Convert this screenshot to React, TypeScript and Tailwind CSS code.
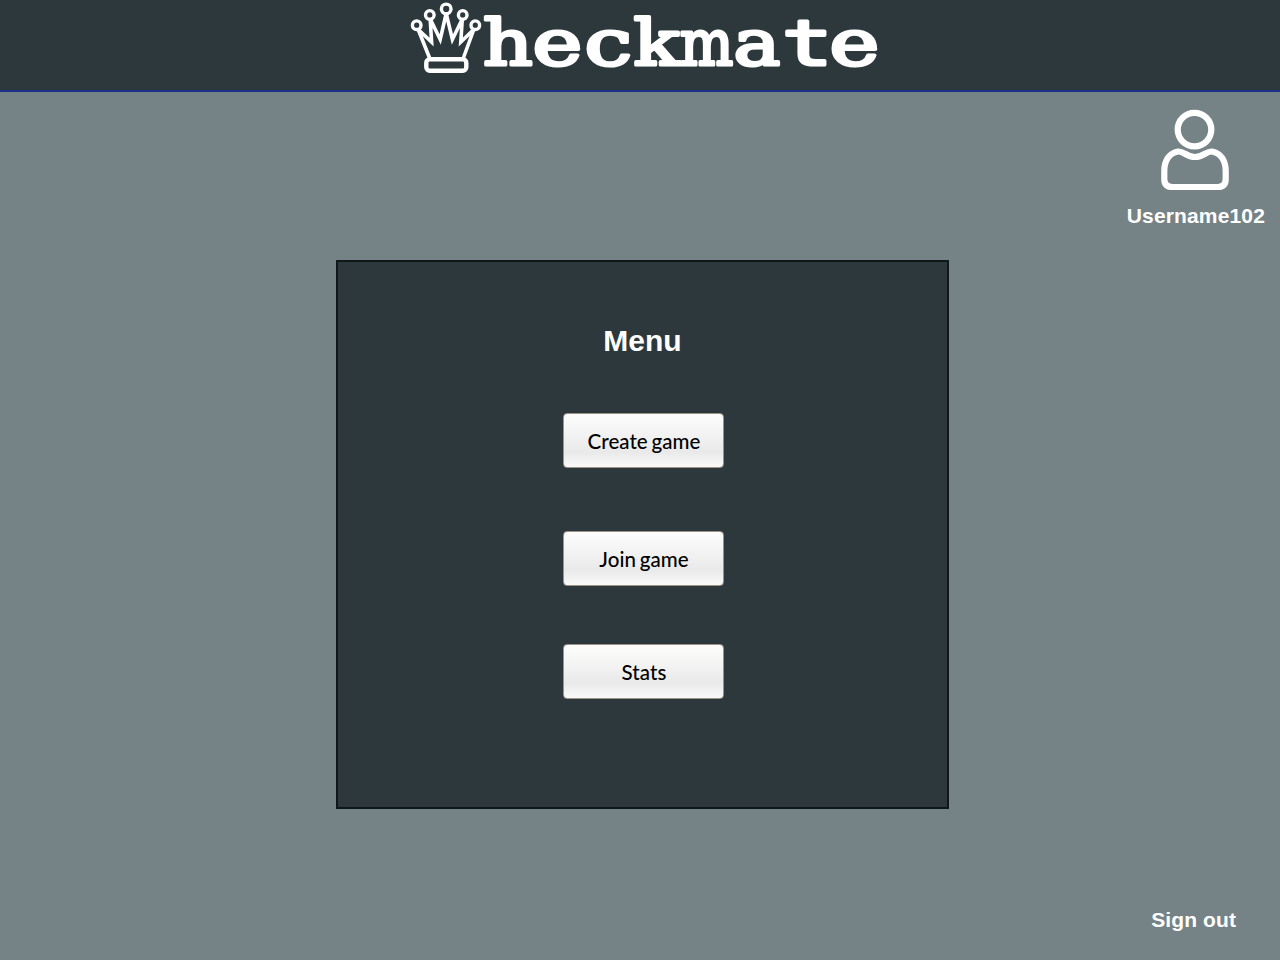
const serif = "font-['DejaVu_Serif',serif]";
const mono = "font-['DejaVu_Sans_Mono',monospace]";

const wordmark = [
  { ch: "h", x: 483, w: 49.7, font: serif },
  { ch: "e", x: 532.6, w: 49.8, font: serif },
  { ch: "c", x: 584.6, w: 47.6, font: serif },
  { ch: "k", x: 633.6, w: 46.2, font: serif },
  { ch: "m", x: 679.8, w: 53.5, font: serif },
  { ch: "a", x: 733.4, w: 46.8, font: serif },
  { ch: "t", x: 782, w: 50.5, font: mono },
  { ch: "e", x: 829.6, w: 49.8, font: serif },
];

function Logo() {
  return (
    <svg className="ml-[400px] block h-[90px] w-[490px]" viewBox="400 0 490 90" role="img" aria-label="Checkmate">
      <g fill="none" stroke="#fff" strokeWidth="3.6">
        <path
          strokeMiterlimit="10"
          d="M430 59 L418.2 29.5 L431.6 42 L430.2 19 L440.2 39.5 L446.2 13.5 L452.4 39.5 L462.3 19 L460.8 42 L473.8 29.5 L463 59"
        />
        <g fill="#2d383c" strokeWidth="3.4">
          <circle cx="416.7" cy="25.2" r="4.3" />
          <circle cx="429.8" cy="14.9" r="4.3" />
          <circle cx="446.2" cy="8.9" r="4.8" />
          <circle cx="462.7" cy="14.9" r="4.3" />
          <circle cx="475.3" cy="25.2" r="4.3" />
        </g>
        <rect x="426.3" y="59.3" width="40" height="11.5" rx="3.5" strokeWidth="4.4" />
      </g>
      <text y="64.8" fill="#fff" stroke="#fff" strokeWidth="3.2" strokeLinejoin="round" className="text-[63px] font-normal">
        {wordmark.map((l, i) => (
          <tspan key={i} x={l.x} textLength={l.w} lengthAdjust="spacingAndGlyphs" className={l.font}>
            {l.ch}
          </tspan>
        ))}
      </text>
    </svg>
  );
}

function UserIcon() {
  return (
    <svg className="mr-px block h-[82px] w-[70px]" viewBox="1160 109 70 82" fill="none" stroke="#fff" strokeWidth="6.2">
      <circle cx="1194.5" cy="129.6" r="16.8" />
      <path
        strokeLinejoin="round"
        d="M1178 151.5 C1184 151 1186 157 1195 157 C1204 157 1206 151 1212 151.5 C1221 153 1225.7 161 1225.7 171 V179 Q1225.7 187 1217.7 187 H1172.3 Q1164.3 187 1164.3 179 V171 C1164.3 161 1169 153 1178 151.5 Z"
      />
    </svg>
  );
}

function MenuButton({ label }: { label: string }) {
  return (
    <button className="flex h-[55px] w-[161px] items-center justify-center rounded-[4px] border border-[#9b9386] bg-[linear-gradient(180deg,#fdfdfc_0%,#f1f1f1_45%,#e9e9e9_72%,#fafafa_100%)] pt-px pl-px font-['Lato',sans-serif] text-[20.5px] font-medium tracking-[0.05px] [word-spacing:-1.5px] text-black">
      {label}
    </button>
  );
}

export default function App() {
  return (
    <div className="flex h-[960px] w-[1280px] flex-col overflow-hidden bg-[#768386] font-['Liberation_Sans',sans-serif] font-bold text-white">
      <header className="h-[92px] shrink-0 border-b-2 border-[#1d338b] bg-[#2d383c]">
        <Logo />
      </header>
      <section className="flex h-[168px] shrink-0 flex-col items-center self-end pt-[17px] pr-[15px]">
        <UserIcon />
        <span className="mt-[13px] text-[21px] leading-6 tracking-[0.15px]">Username102</span>
      </section>
      <main className="ml-[336px] flex h-[549px] w-[613px] shrink-0 flex-col items-center border-2 border-[#101719] bg-[#2d383c]">
        <h1 className="mt-[61px] h-[36px] text-[30px] leading-[36px]">Menu</h1>
        <nav className="mt-[54px] ml-[2px] flex flex-col">
          <MenuButton label="Create game" />
          <div className="mt-[63px]">
            <MenuButton label="Join game" />
          </div>
          <div className="mt-[58px]">
            <MenuButton label="Stats" />
          </div>
        </nav>
      </main>
      <footer className="mt-[99px] mr-[44px] self-end text-[21px] leading-6 tracking-[0.1px]">Sign out</footer>
    </div>
  );
}
